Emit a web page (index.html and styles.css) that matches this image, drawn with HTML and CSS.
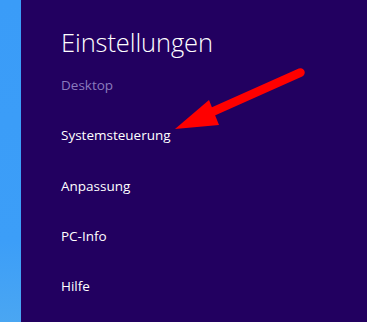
FILE: index.html
```html
<!DOCTYPE html>
<html lang="de">
<head>
<meta charset="utf-8">
<link rel="stylesheet" href="styles.css">
</head>
<body>
<div class="screen">
  <div class="desktop-strip"></div>
  <div class="charm-panel">
    <h1 class="title">Einstellungen</h1>
    <ul class="menu">
      <li class="item item-muted">Desktop</li>
      <li class="item">Systemsteuerung</li>
      <li class="item">Anpassung</li>
      <li class="item">PC-Info</li>
      <li class="item">Hilfe</li>
    </ul>
  </div>
  <svg class="arrow" width="367" height="322" viewBox="0 0 367 322">
    <line x1="300.5" y1="72.5" x2="212" y2="112" stroke="#ff0000" stroke-width="8.5" stroke-linecap="round"/>
    <polygon points="175,129 209,100 219,125" fill="#ff0000"/>
  </svg>
</div>
</body>
</html>
```
FILE: styles.css
```css
html, body {
  margin: 0;
  padding: 0;
}
body {
  width: 367px;
  height: 322px;
  overflow: hidden;
  background: #220060;
}
.screen {
  position: relative;
  display: flex;
  width: 367px;
  height: 322px;
}
.desktop-strip {
  width: 21px;
  flex: none;
  background: linear-gradient(to bottom, #3a9cf8 0%, #3c9ef8 75%, #4aa6f2 100%);
}
.charm-panel {
  flex: 1;
  background: #220060;
  padding-left: 40px;
  font-family: "Open Sans", "Noto Sans", sans-serif;
  color: #ffffff;
}
.title {
  margin: 0;
  padding-top: 24px;
  font-size: 25.5px;
  font-weight: 300;
  line-height: 36px;
  letter-spacing: -0.1px;
}
.menu {
  list-style: none;
  margin: 0;
  padding: 0;
  padding-top: 15px;
}
.item {
  font-size: 13.5px;
  line-height: 20px;
  height: 50.3px;
}
.item-muted {
  color: #8a7bbe;
}
.arrow {
  position: absolute;
  left: 0;
  top: 0;
}
```
